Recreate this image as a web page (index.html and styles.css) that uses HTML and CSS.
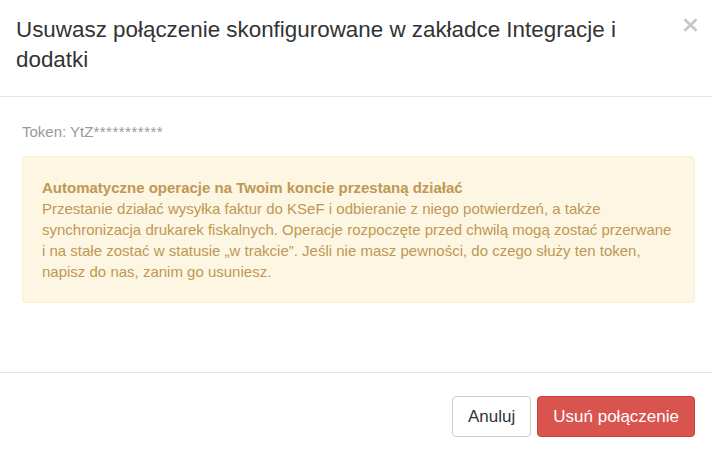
FILE: index.html
```html
<!DOCTYPE html>
<html lang="pl">
<head>
<meta charset="utf-8">
<title>Usuń połączenie</title>
<link rel="stylesheet" href="styles.css">
</head>
<body>
<div class="modal">
  <div class="modal-header">
    <h4 class="modal-title">Usuwasz połączenie skonfigurowane w zakładce Integracje i dodatki</h4>
    <button class="close" type="button" aria-label="Zamknij">
      <svg width="15" height="14" viewBox="0 0 15 14" aria-hidden="true">
        <path d="M1.5 1.2 L13.5 12.8 M13.5 1.2 L1.5 12.8" stroke="#c8c8c8" stroke-width="2.8" fill="none"/>
      </svg>
    </button>
  </div>
  <div class="modal-body">
    <p class="token">Token: YtZ<span class="stars">***********</span></p>
    <div class="alert">
      <strong>Automatyczne operacje na Twoim koncie przestaną działać</strong><br>
      Przestanie działać wysyłka faktur do KSeF i odbieranie z niego potwierdzeń, a także synchronizacja drukarek fiskalnych. Operacje rozpoczęte przed chwilą mogą zostać przerwane i na stałe zostać w statusie „w trakcie”. Jeśli nie masz pewności, do czego służy ten token, napisz do nas, zanim go usuniesz.
    </div>
  </div>
  <div class="modal-footer">
    <button class="btn btn-default" type="button">Anuluj</button>
    <button class="btn btn-danger" type="button">Usuń połączenie</button>
  </div>
</div>
</body>
</html>
```
FILE: styles.css
```css
html, body {
  margin: 0;
  padding: 0;
  background: #fff;
}
body {
  font-family: "Liberation Sans", Arial, sans-serif;
  font-size: 15px;
  color: #333;
  width: 712px;
  height: 462px;
  overflow: hidden;
}
.modal {
  display: flex;
  flex-direction: column;
  height: 462px;
}
.modal-header {
  display: flex;
  align-items: flex-start;
  padding: 15px 14px 21px 16px;
  border-bottom: 1px solid #e5e5e5;
}
.modal-title {
  flex: 1;
  margin: 0;
  font-size: 22.4px;
  font-weight: normal;
  line-height: 30px;
  color: #333;
  padding-right: 40px;
}
.close {
  display: block;
  border: 0;
  background: none;
  padding: 0;
  margin: 3px 0 0 0;
  width: 15px;
  height: 14px;
  cursor: pointer;
}
.close svg {
  display: block;
}
.modal-body {
  flex: 1;
  padding: 25px 17px 0 22px;
}
.token {
  margin: 0 0 14px;
  line-height: 20px;
  color: #999;
}
.stars {
  letter-spacing: 0.5px;
}
.alert {
  padding: 20px 19px;
  line-height: 21px;
  background: #fdf6e3;
  border: 1px solid #fbeed5;
  border-radius: 4px;
  color: #c09853;
}
.alert strong {
  font-weight: bold;
}
.modal-footer {
  display: flex;
  justify-content: flex-end;
  gap: 6px;
  padding: 23px 17px 25px;
  border-top: 1px solid #e5e5e5;
}
.btn {
  height: 41px;
  padding: 0 15px;
  font-family: "Liberation Sans", Arial, sans-serif;
  font-size: 17px;
  border-radius: 4px;
  border: 1px solid transparent;
  cursor: pointer;
}
.btn-default {
  background: #fff;
  border-color: #ccc;
  color: #333;
}
.btn-danger {
  background: #d9534f;
  border-color: #d43f3a;
  color: #fff;
}
```
